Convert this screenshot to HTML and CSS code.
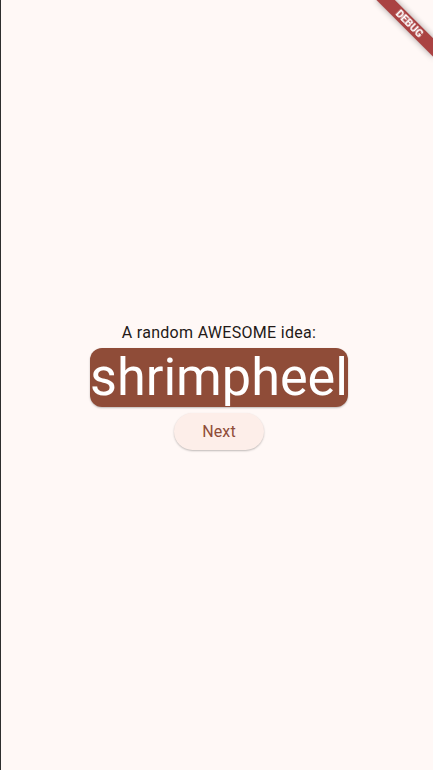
FILE: index.html
```html
<!DOCTYPE html>
<html lang="en">
<head>
<meta charset="utf-8">
<title>Namer App</title>
<link rel="stylesheet" href="styles.css">
</head>
<body>
<main class="screen">
  <div class="column">
    <p class="label">A random AWESOME idea:</p>
    <div class="card"><span class="pair">shrimpheel</span></div>
    <button class="next" type="button">Next</button>
  </div>
</main>
<div class="banner-anchor"><div class="banner">DEBUG</div></div>
</body>
</html>
```
FILE: styles.css
```css
html, body {
  margin: 0;
  height: 100%;
  overflow: hidden;
}
body {
  background: #fff8f6;
  font-family: Roboto, "Noto Sans", sans-serif;
  border-left: 1px solid #2e2e2e;
  box-sizing: border-box;
}
.screen {
  height: 100%;
  padding-left: 4px;
  padding-top: 2px;
  box-sizing: border-box;
  display: flex;
  align-items: center;
  justify-content: center;
}
.column {
  display: flex;
  flex-direction: column;
  align-items: center;
}
.label {
  margin: 0;
  font-size: 16px;
  line-height: 22px;
  letter-spacing: 0.3px;
  color: #231917;
}
.card {
  margin: 4px 0;
  height: 59px;
  padding: 0;
  background: #8f4c38;
  border-radius: 12px;
  box-shadow: 0 1px 2px rgba(0,0,0,0.25);
  display: flex;
  align-items: center;
}
.pair {
  color: #ffffff;
  font-size: 52.2px;
  line-height: 59px;
  font-weight: 400;
}
.next {
  margin-top: 2px;
  height: 37px;
  width: 90px;
  border: none;
  border-radius: 19px;
  background: #fdeee9;
  color: #8f4c38;
  font-family: Roboto, sans-serif;
  font-size: 16px;
  font-weight: 400;
  letter-spacing: 0.1px;
  box-shadow: 0 1px 2px rgba(0,0,0,0.25);
  padding: 0;
}
.banner-anchor {
  position: fixed;
  top: 0;
  right: 0;
  width: 0;
  height: 0;
  transform: rotate(45deg);
  transform-origin: 0 0;
}
.banner {
  position: absolute;
  left: -40px;
  top: 27px;
  width: 80px;
  height: 13px;
  background: rgb(170, 66, 66);
  box-shadow: 0 0 6px rgba(0,0,0,0.35);
  color: #fff;
  font-family: Roboto, sans-serif;
  font-size: 10.5px;
  font-weight: 900;
  line-height: 13px;
  text-align: center;
}
```
